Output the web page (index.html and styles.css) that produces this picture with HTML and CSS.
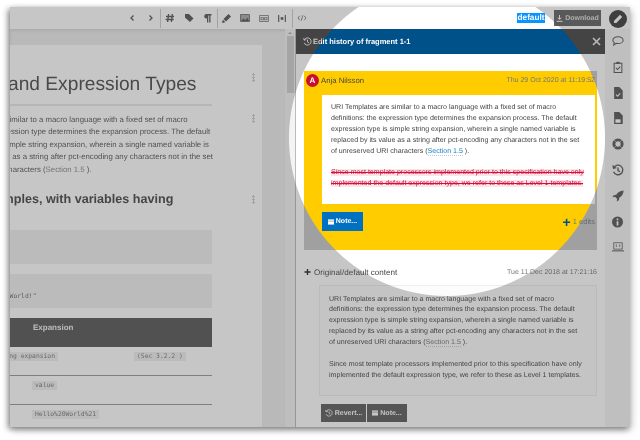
FILE: index.html
```html
<!DOCTYPE html>
<html lang="en">
<head>
<meta charset="utf-8">
<title>Edit history</title>
<link rel="stylesheet" href="styles.css">
</head>
<body>
<div class="window">
  <header class="toolbar">
    <div class="tools">
      <span class="tool"><svg width="8" height="10" viewBox="0 0 8 10"><path d="M5.500 2.500 3 5l2.500 2.500" class="ln"/></svg></span>
      <span class="tool"><svg width="8" height="10" viewBox="0 0 8 10"><path d="M2.500 2.500 5 5 2.500 7.500" class="ln"/></svg></span>
    </div>
    <div class="tools">
      <span class="tool"><svg width="10" height="10" viewBox="0 0 10 10"><path d="M3.600 1 2.600 9M7.400 1l-1 8M1 3.500h8M.7 6.500h8" class="ln"/></svg></span>
      <span class="tool"><svg width="10" height="10" viewBox="0 0 10 10"><path d="M1 1h4l4.500 4.500-3.600 3.600L1 4.600z" class="fl"/></svg></span>
      <span class="tool"><svg width="9" height="10" viewBox="0 0 9 10"><path d="M3.500 1H8.500v1.400H7.500V9.500H6.200V2.400H5.300V9.500H4V5.600H3.500a2.300 2.300 0 0 1 0-4.600z" class="fl"/></svg></span>
    </div>
    <div class="tools">
      <span class="tool"><svg width="11" height="11" viewBox="0 0 11 11"><path d="M7.500 1 10 3.500 5 8.500 2.500 6zM2 6.800 4.200 9l-1.200.800H.8z" class="fl"/></svg></span>
      <span class="tool"><svg width="10" height="8" viewBox="0 0 11 9"><path d="M.5.500h10v8H.5z" class="fr"/><path d="M1 8l3-3 2 2 2-3 2 4z" class="fl"/></svg></span>
      <span class="tool"><svg width="10" height="7" viewBox="0 0 11 8"><path d="M.5.500h10v7H.5z" class="thin"/><path d="M2 3h3v2.500H2zM6 3h3v2.500H6z" class="thin"/></svg></span>
      <span class="tool"><svg width="8" height="7" viewBox="0 0 9 8"><path d="M.7 0v8M8.300 0v8" class="ln"/><path d="M3 2.500h3v3H3z" class="fl"/></svg></span>
    </div>
    <div class="tools last">
      <span class="tool"><svg width="10" height="8" viewBox="0 0 11 9"><path d="M3 2 1 4.500 3 7M8 2l2 2.500L8 7M6.300 1.500 4.700 7.500" class="thin"/></svg></span>
    </div>
    <span class="tag">default</span>
    <span class="download">
      <svg width="7" height="7" viewBox="0 0 7 7"><path d="M3.500 0v4M1.800 2.700l1.700 1.700 1.700-1.700M.5 6.300h6" class="thin-l"/></svg>
      Download
    </span>
    <span class="edit-btn"><svg width="10" height="10" viewBox="0 0 10 10"><path d="M7 .8 9.200 3 3.300 8.900 1 9l.1-2.300z" class="fw"/></svg></span>
  </header>

  <div class="main">
    <section class="doc-pane">
      <article class="page">
        <div class="block">
          <h1>Levels and Expression Types</h1>
          <span class="dots"></span>
        </div>
        <div class="block">
          <p>URI Templates are similar to a macro language with a fixed set of macro definitions: the expression type determines the expansion process. The default expression type is simple string expansion, wherein a single named variable is replaced by its value as a string after pct-encoding any characters not in the set of unreserved URI characters (<a>Section 1.5</a> ).</p>
          <span class="dots"></span>
        </div>
        <div class="block">
          <h2>Level 1 examples, with variables having</h2>
          <span class="dots h2-dots"></span>
        </div>
        <pre class="code-box"></pre>
        <pre class="code-box">hello := "Hello World!"</pre>
        <div class="tbl-head"><span></span><span>Expansion</span></div>
        <div class="tbl-row first">
          <code class="chip wide">Simple string expansion</code>
          <code class="chip sec">(Sec 3.2.2 )</code>
        </div>
        <div class="tbl-row"><span></span><code class="chip">value</code></div>
        <div class="tbl-row"><span></span><code class="chip">Hello%20World%21</code></div>
      </article>
      <div class="scrollbar"><span class="arrow"></span><span class="thumb"></span></div>
    </section>

    <section class="panel">
      <div class="panel-head">
        <svg width="9" height="9" viewBox="0 0 10 10"><path d="M1.500 3a4 4 0 1 1-.2 3.500M.8 1.200 1.300 3.500 3.600 3M5 3v2.500l1.700 1" class="thin-l"/></svg>
        <span class="panel-title">Edit history of fragment 1-1</span>
        <svg width="9" height="9" viewBox="0 0 9 9"><path d="M1 1l7 7M8 1 1 8" class="x"/></svg>
      </div>
      <div class="panel-body">
        <div class="revision">
          <div class="rev-head">
            <span class="avatar">A</span>
            <span class="name">Anja Nilsson</span>
            <span class="date">Thu 29 Oct 2020 at 11:19:52</span>
          </div>
          <div class="rev-text">
            <p>URI Templates are similar to a macro language with a fixed set of macro definitions: the expression type determines the expansion process. The default expression type is simple string expansion, wherein a single named variable is replaced by its value as a string after pct-encoding any characters not in the set of unreserved URI characters (<a class="link">Section 1.5</a> ).</p>
            <p><del>Since most template processors implemented prior to this specification have only implemented the default expression type, we refer to these as Level 1 templates.</del></p>
          </div>
          <div class="rev-foot">
            <span class="btn blue"><svg width="6" height="6" viewBox="0 0 7 7"><path d="M0 .5h7v6H0z" class="fw"/><path d="M0 2.500h7" class="note-line"/></svg> Note...</span>
            <span class="edits"><b>+</b> 1 edits</span>
          </div>
        </div>
        <div class="orig-head">
          <span class="plus">+</span>
          <span class="name">Original/default content</span>
          <span class="date">Tue 11 Dec 2018 at 17:21:16</span>
        </div>
        <div class="orig-text">
          <p>URI Templates are similar to a macro language with a fixed set of macro definitions: the expression type determines the expansion process. The default expression type is simple string expansion, wherein a single named variable is replaced by its value as a string after pct-encoding any characters not in the set of unreserved URI characters (<a>Section 1.5</a> ).</p>
          <p>Since most template processors implemented prior to this specification have only implemented the default expression type, we refer to these as Level 1 templates.</p>
        </div>
        <div class="orig-actions">
          <span class="btn dark"><svg width="8" height="8" viewBox="0 0 10 10"><path d="M1.500 3a4 4 0 1 1-.2 3.500M.8 1.200 1.300 3.500 3.600 3M5 3v2.500l1.700 1" class="thin-l"/></svg> Revert...</span>
          <span class="btn dark"><svg width="6" height="6" viewBox="0 0 7 7"><path d="M0 .5h7v6H0z" class="fw"/><path d="M0 2.500h7" class="note-line"/></svg> Note...</span>
        </div>
      </div>
    </section>

    <nav class="side">
      <svg width="12" height="12" viewBox="0 0 14 12"><path d="M7 1c3.300 0 6 1.700 6 4s-2.700 4-6 4c-.8 0-1.500-.1-2.200-.3L2 10.700l.6-2.900C1.600 7 1 6 1 5c0-2.300 2.700-4 6-4z" class="ic"/></svg>
      <svg width="12" height="12" viewBox="0 0 11 14"><path d="M1 2.500h9v11H1z" class="ic"/><path d="M3.500 1h4v2.500h-4z" class="fl"/><path d="M3 8l2 2 3-3.500" class="ic"/></svg>
      <svg width="12" height="12" viewBox="0 0 11 14"><path d="M1 0h6l4 4v10H1z" class="fl"/><path d="M3.200 9 5 10.800 8 7.500" class="wl"/></svg>
      <svg width="12" height="12" viewBox="0 0 11 14"><path d="M1 0h6l4 4v10H1z" class="fl"/><path d="M2.500 8.500h6v4h-6z" class="fw"/></svg>
      <svg width="12" height="12" viewBox="0 0 14 14"><circle cx="7" cy="7" r="4.800" class="ring"/><path d="M2 2l2.500 2.500M12 2 9.500 4.500M2 12l2.500-2.500M12 12 9.500 9.500" class="cut"/></svg>
      <svg width="12" height="12" viewBox="0 0 10 10"><path d="M1.500 3a4 4 0 1 1-.2 3.500M.8 1.200 1.300 3.500 3.600 3M5 3v2.500l1.700 1" class="ic-s"/></svg>
      <svg width="12" height="12" viewBox="0 0 14 14"><path d="M13.500.5c-4 .2-6.500 2-8.500 5L2 6 .5 8.500 3.500 8 6 10.500l-.5 3L8 12l.5-3c3-2 5-4.500 5-8.500z" class="fl"/></svg>
      <svg width="11" height="12" viewBox="0 0 13 13"><circle cx="6.500" cy="6.500" r="6.500" class="fl"/><path d="M5.500 5.500h2v5h-2zM5.500 2.500h2v2h-2z" class="fw"/></svg>
      <svg width="12" height="12" viewBox="0 0 14 12"><path d="M2 1h10v7.500H2z" class="ic-t"/><path d="M0 10.500h14" class="ic"/><path d="M5 3v3M9 3v3" class="ic-t"/></svg>
    </nav>
  </div>
  <div class="dim"></div>
</div>
</body>
</html>
```
FILE: styles.css
```css
* { box-sizing: border-box; }
html, body { margin: 0; height: 100%; background: #fff; overflow: hidden; }
body {
  padding: 7px 10px 0;
  font-family: "Liberation Sans", Arial, sans-serif;
  color: #444;
  text-rendering: geometricPrecision;
}

.window {
  position: relative;
  width: 620px;
  height: 420px;
  display: flex;
  flex-direction: column;
  background: #fff;
  box-shadow: -2px 2px 6px rgba(0,0,0,.45), 2px 3px 8px rgba(0,0,0,.2);
  overflow: hidden;
  filter: blur(.35px);
}
.dim {
  position: absolute;
  inset: 0;
  backdrop-filter: grayscale(1) brightness(.833) contrast(.828);
  -webkit-mask-image: radial-gradient(circle at 437px 131px, transparent 157.5px, #000 158.500px);
  mask-image: radial-gradient(circle at 437px 131px, transparent 157.5px, #000 158.500px);
}

/* svg primitives */
.ln { fill: none; stroke: #555; stroke-width: 1.300; }
.thin { fill: none; stroke: #666; stroke-width: .9; }
.thin-l { fill: none; stroke: #fff; stroke-width: 1; }
.fl { fill: #555; stroke: none; }
.fr { fill: #aaa; stroke: #666; }
.fw { fill: #fff; }
.note-line { stroke: #888; stroke-width: .8; fill: none; }
.wl { fill: none; stroke: #fff; stroke-width: 1.300; }
.x { stroke: #eee; stroke-width: 1.600; fill: none; }
.ic { fill: none; stroke: #555; stroke-width: 1.200; }
.ic-s { fill: none; stroke: #555; stroke-width: 1.100; }
.ic-t { fill: none; stroke: #555; stroke-width: .9; }
.ring { fill: none; stroke: #555; stroke-width: 3.400; }
.cut { stroke: #f3f3f3; stroke-width: .7; fill: none; }

/* toolbar */
.toolbar {
  flex: 0 0 22px;
  display: flex;
  align-items: center;
  padding-left: 113px;
  background: #fff;
}
.tools { display: flex; height: 19px; border-right: 1px solid #ccc; }
.tools.last { border-right: 0; margin-right: auto; }
.tool { width: 18.500px; display: flex; align-items: center; justify-content: center; }
.tag {
  background: #0a94ff;
  color: #fff;
  font-size: 8.200px;
  font-weight: 700;
  line-height: 10px;
  width: 28px;
  text-align: center;
  margin-right: 9px;
}
.download {
  width: 47px;
  height: 16px;
  display: flex;
  align-items: center;
  justify-content: center;
  gap: 2px;
  background: #616161;
  color: #ddd;
  font-size: 7px;
  font-weight: 700;
  margin-right: 8px;
}
.edit-btn {
  width: 18px;
  height: 18px;
  margin: 2px 3px 0 0;
  border-radius: 50%;
  background: #3b3b3b;
  display: flex;
  align-items: center;
  justify-content: center;
}

.main { flex: 1; min-height: 0; display: flex; }

/* document */
.doc-pane {
  flex: 0 0 286px;
  position: relative;
  display: flex;
  background: #ececec;
  border-right: 1px solid #bbb;
  box-shadow: inset 0 2px 3px rgba(0,0,0,.08);
  overflow: hidden;
}
.page {
  flex: 0 0 auto;
  width: 333px;
  margin: 16px 0 0 -81px;
  padding: 27px 47px 0 10px;
  background: #fff;
}
.block { position: relative; }
.dots {
  position: absolute;
  right: -39.500px;
  top: 0;
  width: 3px;
  height: 9px;
  background: radial-gradient(circle, #ccc 1.200px, transparent 1.400px) 0 0 / 3px 3px;
}
h1 {
  margin: 0 3px 8px 8.200px;
  padding: 0 0 6px 0;
  border-bottom: 2px solid #e8e8e8;
  font-size: 19.200px;
  line-height: 26px;
  font-weight: 400;
  color: #4b4b4b;
  white-space: nowrap;
}
.block:first-child .dots { top: 1px; }
p { margin: 0; }
.page p { font-size: 7.800px; line-height: 12.400px; color: #555; }
.page a { color: #888; }
h2 {
  margin: 16px 0 23px -3.600px;
  font-size: 12.600px;
  line-height: 15px;
  font-weight: 700;
  color: #444;
  white-space: nowrap;
}
.h2-dots { top: 3px; }
.code-box {
  margin: 0 3px 10px 0;
  height: 34px;
  background: #f0f0f0;
  font: 6.400px/12px "DejaVu Sans Mono", monospace;
  color: #666;
  padding: 16px 0 0 9px;
  overflow: hidden;
}
.tbl-head {
  height: 29px;
  margin-right: 3px;
  display: grid;
  grid-template-columns: 94px 1fr;
  background: #565656;
  color: #eee;
  font-size: 8px;
  font-weight: 700;
  padding-top: 5px;
}
.tbl-row {
  height: 29px;
  margin-right: 3px;
  display: grid;
  grid-template-columns: 93px 1fr;
  align-items: start;
  padding-top: 5px;
  border-top: 1px solid #999;
  justify-items: start;
}
.tbl-row.first { border-top: 0; height: 28px; grid-template-columns: 195px 1fr; }
.chip {
  font: 6.350px/9px "DejaVu Sans Mono", monospace;
  background: #f0f0f0;
  color: #777;
  padding: 0 3px;
}
.chip.wide { justify-self: end; margin-right: 76px; white-space: nowrap; }
.chip.sec { white-space: nowrap; }

/* scrollbar */
.scrollbar {
  position: absolute;
  right: 0;
  top: 0;
  bottom: 0;
  width: 10px;
  display: flex;
  flex-direction: column;
  align-items: center;
  background: #f4f4f4;
}
.arrow {
  margin-top: 3px;
  border: 2px solid transparent;
  border-bottom: 2px solid #aaa;
  border-top: 0;
}
.thumb { width: 7px; height: 57px; margin-top: 2px; background: #cfcfcf; }

/* panel */
.panel { flex: 0 0 309px; display: flex; flex-direction: column; background: #fff; }
.panel-head {
  flex: 0 0 25px;
  display: flex;
  align-items: center;
  gap: 1px;
  padding: 0 4px 0 7px;
  background: #005089;
  color: #fff;
  font-size: 7.500px;
  font-weight: 700;
}
.panel-title { flex: 1; }
.panel-body { flex: 1; padding: 17px 8px 0 8px; display: flex; flex-direction: column; }
.revision { height: 179px; background: #fc0; padding-right: 2px; }
.rev-head {
  height: 18px;
  display: flex;
  align-items: center;
  padding-left: 2px;
  gap: 2px;
}
.avatar {
  width: 13px;
  height: 13px;
  border-radius: 50%;
  background: #c8102e;
  color: #fff;
  font-size: 8px;
  font-weight: 700;
  text-align: center;
  line-height: 13px;
}
.name { font-size: 7.750px; color: #444; flex: 1; }
.orig-head .name { font-size: 8.100px; }
.date { font-size: 7px; color: #777; }
.rev-text {
  margin: 6px 0 0 18px;
  height: 109px;
  background: #fff;
  padding: 8px 8.500px 0 9px;
  font-size: 7.070px;
  line-height: 10.900px;
}
.rev-text p + p, .orig-text p + p { margin-top: 10.800px; }
.link { color: #1a7fc4; border-bottom: 1px dotted #bcd; }
del { color: #d0103a; background: #fde4e8; text-decoration: line-through; }
.rev-foot {
  margin: 8px 0 0 18px;
  display: flex;
  align-items: center;
  justify-content: space-between;
}
.btn {
  height: 19px;
  display: inline-flex;
  align-items: center;
  justify-content: center;
  gap: 2px;
  font-size: 7px;
  font-weight: 700;
  color: #fff;
}
.blue { width: 41px; background: #0070c0; }
.edits { font-size: 7.600px; color: #777; display: flex; align-items: center; gap: 2px; }
.edits b { color: #005089; font-size: 14px; line-height: 10px; }
.orig-head {
  margin-top: 15px;
  height: 14px;
  display: flex;
  align-items: center;
  gap: 1px;
}
.plus { font-size: 12px; font-weight: 700; color: #222; width: 9px; }
.orig-text {
  margin: 6px 0 0 15px;
  height: 111px;
  background: #fcfcfc;
  border: 1px solid #eee;
  padding: 8.500px 11.500px 0 9px;
  font-size: 7.070px;
  line-height: 10.900px;
}
.orig-text a { color: #777; border-bottom: 1px dotted #ccc; }
.orig-actions { margin: 8px 0 0 17px; display: flex; gap: 1px; }
.dark { background: #5b5b5b; height: 18px; width: 45px; }
.dark + .dark { width: 40px; }

/* sidebar */
.side {
  flex: 1;
  display: flex;
  flex-direction: column;
  align-items: center;
  gap: 13.800px;
  padding-top: 6px;
  background: #f5f5f5;
}
```
